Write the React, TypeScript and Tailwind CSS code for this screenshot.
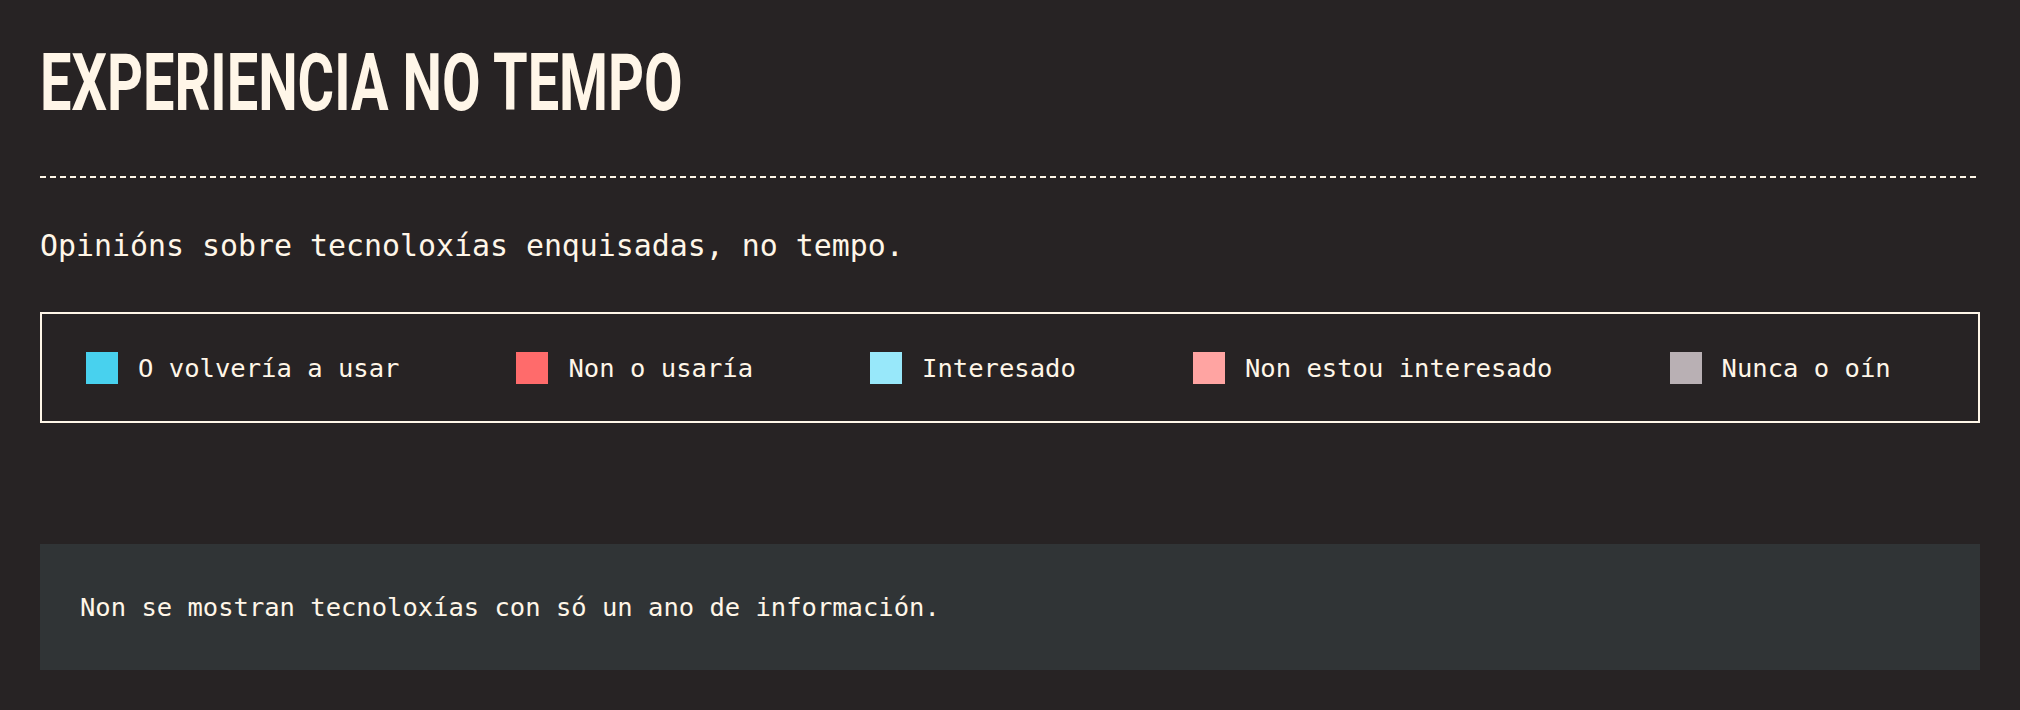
const legend = [
  { label: 'O volvería a usar', color: 'bg-[#48d1ee]' },
  { label: 'Non o usaría', color: 'bg-[#ff6b6b]' },
  { label: 'Interesado', color: 'bg-[#98e8fa]' },
  { label: 'Non estou interesado', color: 'bg-[#ffa4a2]' },
  { label: 'Nunca o oín', color: 'bg-[#b9b0b4]' },
];

export default function App() {
  return (
    <div className="min-h-[710px] bg-[#272324] px-10 pt-[44px] pb-10 text-[#fff6e8] font-['DejaVu_Sans_Mono',monospace]">
      <h1 className="origin-left scale-x-[0.708] whitespace-nowrap font-['Roboto',sans-serif] text-[79px] font-bold leading-none">
        EXPERIENCIA NO TEMPO
      </h1>

      <div className="mt-[53px] h-[2px] bg-[repeating-linear-gradient(to_right,#fff6e8_0_6px,transparent_6px_10px)]" />

      <p className="mt-[50px] text-[29.9px] leading-[36px]">
        Opinións sobre tecnoloxías enquisadas, no tempo.
      </p>

      <div className="mt-[48px] flex h-[111px] items-center gap-[117px] border-2 border-[#fff6e8] pl-[44px]">
        {legend.map((item) => (
          <div key={item.label} className="flex items-center gap-5">
            <span className={`h-8 w-8 shrink-0 ${item.color}`} />
            <span className="text-[25.55px] leading-8 whitespace-nowrap">{item.label}</span>
          </div>
        ))}
      </div>

      <div className="mt-[121px] flex h-[126px] items-center bg-[#303436] px-10">
        <p className="text-[25.5px] leading-8">
          Non se mostran tecnoloxías con só un ano de información.
        </p>
      </div>
    </div>
  );
}
